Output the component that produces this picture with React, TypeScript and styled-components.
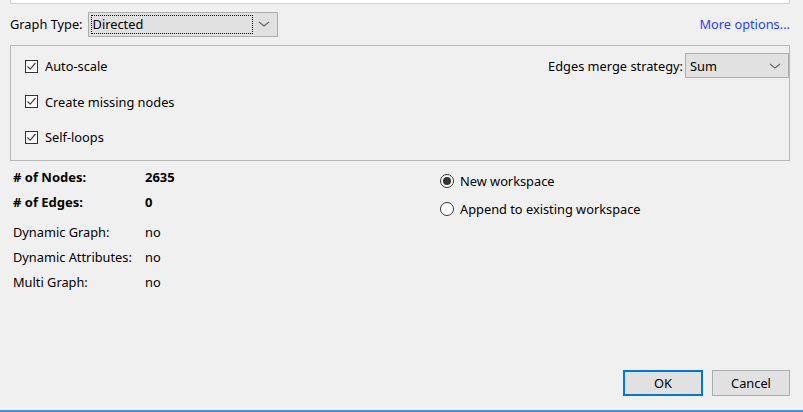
import React from "react";
import styled, { createGlobalStyle } from "styled-components";

const Global = createGlobalStyle`
  html, body { margin: 0; padding: 0; background: #f0f0f0; }
  body { font-family: "Noto Sans", "DejaVu Sans", sans-serif; font-size: 12.8px; color: #000; }
`;

const Window = styled.div`
  width: 803px;
  height: 412px;
  box-sizing: border-box;
  background: #f0f0f0;
  display: flex;
  flex-direction: column;
  border-bottom: 2px solid #3d8ee0;
`;

const TopStrip = styled.div`
  margin: 0 13px 0 10px;
  height: 3px;
  background: #fff;
  border: 1px solid #d4d4d4;
  border-top: none;
`;

const HeaderRow = styled.div`
  display: flex;
  align-items: center;
  margin: 7px 13px 0 10px;
  height: 26px;
`;

const Label = styled.span`
  white-space: nowrap;
`;

const Combo = styled.div<{ $w: number; $gap: number }>`
  width: ${(p) => p.$w}px;
  height: 25px;
  box-sizing: border-box;
  background: #e1e1e1;
  border: 1px solid #adadad;
  display: flex;
  align-items: center;
  padding: 2px;
  margin-left: ${(p) => p.$gap}px;
`;

const ComboValue = styled.div<{ $focus?: boolean }>`
  flex: 1;
  height: 100%;
  box-sizing: border-box;
  display: flex;
  align-items: center;
  padding-left: 1px;
  border: 1px dotted ${(p) => (p.$focus ? "#000" : "transparent")};
`;

const Chevron = styled.svg`
  width: 22px;
  flex: none;
`;

const MoreLink = styled.a`
  margin-left: auto;
  color: #2a3ff5;
  text-decoration: none;
  cursor: pointer;
`;

const OptionsBox = styled.div`
  margin: 8px 13px 0 10px;
  height: 116px;
  box-sizing: border-box;
  border: 1px solid #b8b8b8;
  display: flex;
  justify-content: space-between;
  padding: 8px 0 0 14px;
`;

const CheckList = styled.div`
  display: flex;
  flex-direction: column;
  gap: 13.5px;
  padding-top: 1px;
`;

const CheckRow = styled.label`
  display: flex;
  align-items: center;
  gap: 7px;
  height: 22px;
`;

const Box = styled.span`
  width: 13px;
  height: 13px;
  box-sizing: border-box;
  border: 1px solid #333;
  background: #fff;
  display: flex;
  align-items: center;
  justify-content: center;
`;

const MergeRow = styled.div`
  display: flex;
  align-items: center;
  align-self: flex-start;
  margin-top: -1px;
`;

const Stats = styled.div`
  display: flex;
  margin: 6px 13px 0 13px;
`;

const StatGrid = styled.div`
  width: 427px;
  display: grid;
  grid-template-columns: 132px 1fr;
  grid-auto-rows: 25px;
  align-items: center;
`;

const StatKey = styled.span<{ $bold?: boolean }>`
  font-weight: ${(p) => (p.$bold ? 700 : 400)};
  font-size: ${(p) => (p.$bold ? "13px" : "12.8px")};
  margin-top: ${(p) => (p.$bold ? "-6px" : "5px")};
`;

const RadioList = styled.div`
  display: flex;
  flex-direction: column;
`;

const RadioRow = styled.label`
  display: flex;
  align-items: center;
  gap: 6px;
  height: 28px;
`;

const RadioCircle = styled.span<{ $on?: boolean }>`
  width: 14px;
  height: 14px;
  box-sizing: border-box;
  border-radius: 50%;
  border: 1px solid #333;
  background: #fff;
  display: flex;
  align-items: center;
  justify-content: center;
  &::after {
    content: "";
    width: 8px;
    height: 8px;
    border-radius: 50%;
    background: ${(p) => (p.$on ? "#333" : "transparent")};
  }
`;

const Footer = styled.div`
  margin-top: auto;
  display: flex;
  justify-content: flex-end;
  gap: 9px;
  margin-right: 13px;
  margin-bottom: 14px;
`;

const Button = styled.button<{ $default?: boolean }>`
  width: ${(p) => (p.$default ? "80px" : "78px")};
  height: 26px;
  box-sizing: border-box;
  background: #e1e1e1;
  border: ${(p) => (p.$default ? "2px solid #0078d7" : "1px solid #adadad")};
  font-family: inherit;
  font-size: 12.8px;
  color: #000;
  padding: 0;
`;

const ChevronIcon = () => (
  <Chevron viewBox="0 0 22 10" height="10">
    <path d="M6 3 L11 7 L16 3" fill="none" stroke="#666" strokeWidth="1.1" />
  </Chevron>
);

const CheckMark = () => (
  <svg width="11" height="11" viewBox="0 0 11 11">
    <path d="M1.5 5.5 L4.2 8.2 L9.5 2" fill="none" stroke="#444" strokeWidth="1.2" />
  </svg>
);

const Check = ({ label }: { label: string }) => (
  <CheckRow>
    <Box>
      <CheckMark />
    </Box>
    <span>{label}</span>
  </CheckRow>
);

export default function App() {
  return (
    <>
      <Global />
      <Window>
        <TopStrip />
        <HeaderRow>
          <Label>Graph Type:</Label>
          <Combo $w={190} $gap={5}>
            <ComboValue $focus>Directed</ComboValue>
            <ChevronIcon />
          </Combo>
          <MoreLink>More options...</MoreLink>
        </HeaderRow>
        <OptionsBox>
          <CheckList>
            <Check label="Auto-scale" />
            <Check label="Create missing nodes" />
            <Check label="Self-loops" />
          </CheckList>
          <MergeRow>
            <Label>Edges merge strategy:</Label>
            <Combo $w={104} $gap={2}>
              <ComboValue>Sum</ComboValue>
              <ChevronIcon />
            </Combo>
          </MergeRow>
        </OptionsBox>
        <Stats>
          <StatGrid>
            <StatKey $bold># of Nodes:</StatKey>
            <StatKey $bold>2635</StatKey>
            <StatKey $bold># of Edges:</StatKey>
            <StatKey $bold>0</StatKey>
            <StatKey>Dynamic Graph:</StatKey>
            <StatKey>no</StatKey>
            <StatKey>Dynamic Attributes:</StatKey>
            <StatKey>no</StatKey>
            <StatKey>Multi Graph:</StatKey>
            <StatKey>no</StatKey>
          </StatGrid>
          <RadioList>
            <RadioRow>
              <RadioCircle $on />
              <span>New workspace</span>
            </RadioRow>
            <RadioRow>
              <RadioCircle />
              <span>Append to existing workspace</span>
            </RadioRow>
          </RadioList>
        </Stats>
        <Footer>
          <Button $default>OK</Button>
          <Button>Cancel</Button>
        </Footer>
      </Window>
    </>
  );
}
